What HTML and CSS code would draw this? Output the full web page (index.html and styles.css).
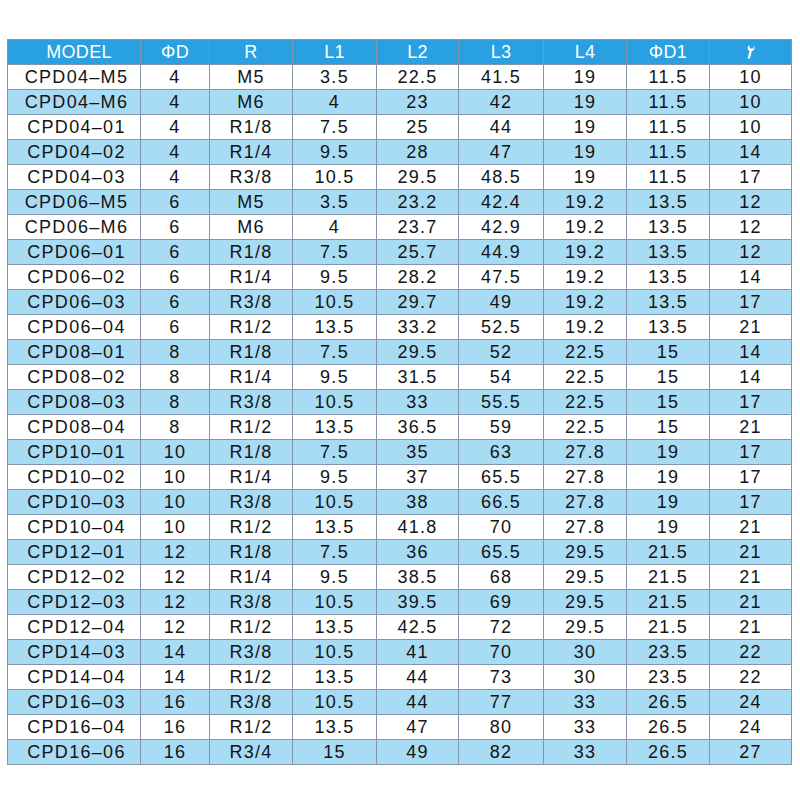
FILE: index.html
```html
<!DOCTYPE html>
<html>
<head>
<meta charset="utf-8">
<link rel="stylesheet" href="styles.css">
</head>
<body>
<table class="spec">
<colgroup>
<col class="c-model"><col class="c-d"><col class="c-r"><col class="c-l1"><col class="c-l2"><col class="c-l3"><col class="c-l4"><col class="c-d1"><col class="c-w">
</colgroup>
<thead>
<tr><th class="first">MODEL</th><th>ΦD</th><th>R</th><th>L1</th><th>L2</th><th>L3</th><th>L4</th><th>ΦD1</th><th><svg class="wrench" width="12" height="16" viewBox="0 0 12 16"><path d="M4.2 1.2 C1.8 2.8 2.2 6.6 5.4 7.2 C8.6 7.6 10.6 4.6 9 1.6 L8.4 4.2 L6.2 4.8 L4.6 3.6 Z" fill="#fff"/><path d="M4.6 6.8 L2.6 14.6 L5 14.6 L6.8 7.2 Z" fill="#fff"/></svg></th></tr>
</thead>
<tbody>
<tr><td>CPD04–M5</td><td>4</td><td>M5</td><td>3.5</td><td>22.5</td><td>41.5</td><td>19</td><td>11.5</td><td>10</td></tr>
<tr><td>CPD04–M6</td><td>4</td><td>M6</td><td>4</td><td>23</td><td>42</td><td>19</td><td>11.5</td><td>10</td></tr>
<tr><td>CPD04–01</td><td>4</td><td>R1/8</td><td>7.5</td><td>25</td><td>44</td><td>19</td><td>11.5</td><td>10</td></tr>
<tr><td>CPD04–02</td><td>4</td><td>R1/4</td><td>9.5</td><td>28</td><td>47</td><td>19</td><td>11.5</td><td>14</td></tr>
<tr><td>CPD04–03</td><td>4</td><td>R3/8</td><td>10.5</td><td>29.5</td><td>48.5</td><td>19</td><td>11.5</td><td>17</td></tr>
<tr><td>CPD06–M5</td><td>6</td><td>M5</td><td>3.5</td><td>23.2</td><td>42.4</td><td>19.2</td><td>13.5</td><td>12</td></tr>
<tr><td>CPD06–M6</td><td>6</td><td>M6</td><td>4</td><td>23.7</td><td>42.9</td><td>19.2</td><td>13.5</td><td>12</td></tr>
<tr><td>CPD06–01</td><td>6</td><td>R1/8</td><td>7.5</td><td>25.7</td><td>44.9</td><td>19.2</td><td>13.5</td><td>12</td></tr>
<tr><td>CPD06–02</td><td>6</td><td>R1/4</td><td>9.5</td><td>28.2</td><td>47.5</td><td>19.2</td><td>13.5</td><td>14</td></tr>
<tr><td>CPD06–03</td><td>6</td><td>R3/8</td><td>10.5</td><td>29.7</td><td>49</td><td>19.2</td><td>13.5</td><td>17</td></tr>
<tr><td>CPD06–04</td><td>6</td><td>R1/2</td><td>13.5</td><td>33.2</td><td>52.5</td><td>19.2</td><td>13.5</td><td>21</td></tr>
<tr><td>CPD08–01</td><td>8</td><td>R1/8</td><td>7.5</td><td>29.5</td><td>52</td><td>22.5</td><td>15</td><td>14</td></tr>
<tr><td>CPD08–02</td><td>8</td><td>R1/4</td><td>9.5</td><td>31.5</td><td>54</td><td>22.5</td><td>15</td><td>14</td></tr>
<tr><td>CPD08–03</td><td>8</td><td>R3/8</td><td>10.5</td><td>33</td><td>55.5</td><td>22.5</td><td>15</td><td>17</td></tr>
<tr><td>CPD08–04</td><td>8</td><td>R1/2</td><td>13.5</td><td>36.5</td><td>59</td><td>22.5</td><td>15</td><td>21</td></tr>
<tr><td>CPD10–01</td><td>10</td><td>R1/8</td><td>7.5</td><td>35</td><td>63</td><td>27.8</td><td>19</td><td>17</td></tr>
<tr><td>CPD10–02</td><td>10</td><td>R1/4</td><td>9.5</td><td>37</td><td>65.5</td><td>27.8</td><td>19</td><td>17</td></tr>
<tr><td>CPD10–03</td><td>10</td><td>R3/8</td><td>10.5</td><td>38</td><td>66.5</td><td>27.8</td><td>19</td><td>17</td></tr>
<tr><td>CPD10–04</td><td>10</td><td>R1/2</td><td>13.5</td><td>41.8</td><td>70</td><td>27.8</td><td>19</td><td>21</td></tr>
<tr><td>CPD12–01</td><td>12</td><td>R1/8</td><td>7.5</td><td>36</td><td>65.5</td><td>29.5</td><td>21.5</td><td>21</td></tr>
<tr><td>CPD12–02</td><td>12</td><td>R1/4</td><td>9.5</td><td>38.5</td><td>68</td><td>29.5</td><td>21.5</td><td>21</td></tr>
<tr><td>CPD12–03</td><td>12</td><td>R3/8</td><td>10.5</td><td>39.5</td><td>69</td><td>29.5</td><td>21.5</td><td>21</td></tr>
<tr><td>CPD12–04</td><td>12</td><td>R1/2</td><td>13.5</td><td>42.5</td><td>72</td><td>29.5</td><td>21.5</td><td>21</td></tr>
<tr><td>CPD14–03</td><td>14</td><td>R3/8</td><td>10.5</td><td>41</td><td>70</td><td>30</td><td>23.5</td><td>22</td></tr>
<tr><td>CPD14–04</td><td>14</td><td>R1/2</td><td>13.5</td><td>44</td><td>73</td><td>30</td><td>23.5</td><td>22</td></tr>
<tr><td>CPD16–03</td><td>16</td><td>R3/8</td><td>10.5</td><td>44</td><td>77</td><td>33</td><td>26.5</td><td>24</td></tr>
<tr><td>CPD16–04</td><td>16</td><td>R1/2</td><td>13.5</td><td>47</td><td>80</td><td>33</td><td>26.5</td><td>24</td></tr>
<tr><td>CPD16–06</td><td>16</td><td>R3/4</td><td>15</td><td>49</td><td>82</td><td>33</td><td>26.5</td><td>27</td></tr>
</tbody>
</table>
</body>
</html>
```
FILE: styles.css
```css
html, body {
  margin: 0;
  padding: 0;
  background: #ffffff;
}
body {
  padding: 39px 0 0 7px;
  font-family: "Liberation Sans", Arial, sans-serif;
}
.spec {
  table-layout: fixed;
  border-collapse: separate;
  border-spacing: 1px;
  background: #8593ab;
  width: 785px;
}
.c-model { width: 132px; }
.c-d { width: 68px; }
.c-r { width: 82px; }
.c-l1 { width: 83px; }
.c-l2 { width: 81px; }
.c-l3 { width: 84px; }
.c-l4 { width: 82px; }
.c-d1 { width: 82px; }
.c-w { width: 81px; }
.spec th,
.spec td {
  height: 24px;
  padding: 0;
  text-align: center;
  vertical-align: middle;
  line-height: 24px;
  white-space: nowrap;
  overflow: hidden;
}
.spec th {
  background: #29a0e1;
  color: #ffffff;
  font-weight: normal;
  font-size: 18px;
  letter-spacing: 0.3px;
}
.spec th.first {
  padding-left: 10px;
}
.spec td {
  background: #ffffff;
  color: #141414;
  font-size: 18px;
  letter-spacing: 1.3px;
}
.spec td:first-child {
  padding-left: 5px;
}
.spec tbody tr:nth-child(even) td {
  background: #a8dbf4;
}
.wrench {
  display: inline-block;
  vertical-align: middle;
  margin-top: -3px;
}
```
